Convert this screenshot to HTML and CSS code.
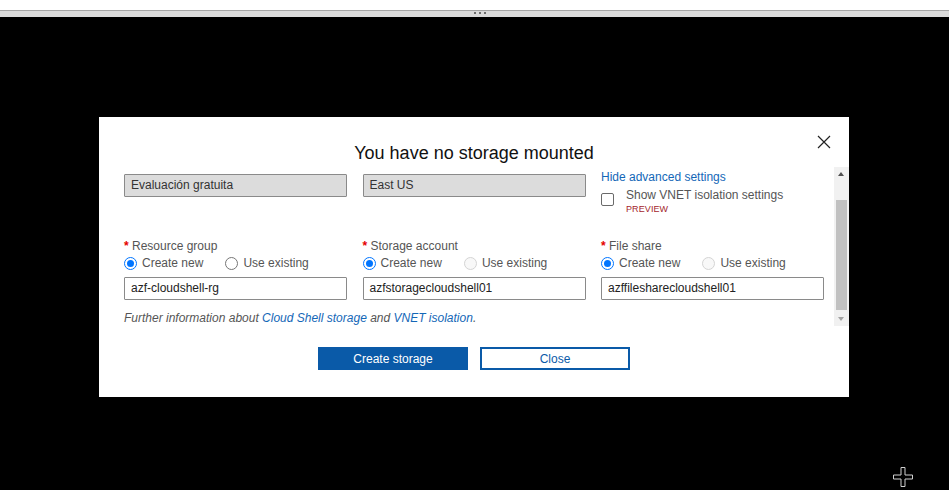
FILE: index.html
```html
<!DOCTYPE html>
<html>
<head>
<meta charset="utf-8">
<link rel="stylesheet" href="styles.css">
</head>
<body>
<div class="topspace"></div>
<div class="splitter"><span class="dot"></span><span class="dot"></span><span class="dot"></span></div>
<div class="stage">
  <div class="dialog">
    <button class="close" aria-label="Close">
      <svg width="14" height="14" viewBox="0 0 14 14"><path d="M1 1 L13 13 M13 1 L1 13" stroke="#222" stroke-width="1.2" fill="none"/></svg>
    </button>
    <h1 class="title">You have no storage mounted</h1>
    <div class="scroller">
      <div class="content">
        <div class="grid">
          <div class="cell pad-top"><div class="field readonly">Evaluación gratuita</div></div>
          <div class="cell pad-top"><div class="field readonly">East US</div></div>
          <div class="cell">
            <a class="link advanced">Hide advanced settings</a>
            <div class="check-row">
              <span class="checkbox"></span>
              <div class="check-text">
                <div class="check-label">Show VNET isolation settings</div>
                <div class="preview">PREVIEW</div>
              </div>
            </div>
          </div>
        </div>
        <div class="grid row2">
          <div class="cell">
            <div class="label"><span class="req">*</span> Resource group</div>
            <div class="radios">
              <span class="radio on"></span><span class="rtext">Create new</span>
              <span class="radio"></span><span class="rtext">Use existing</span>
            </div>
            <div class="field">azf-cloudshell-rg</div>
          </div>
          <div class="cell">
            <div class="label"><span class="req">*</span> Storage account</div>
            <div class="radios">
              <span class="radio on"></span><span class="rtext">Create new</span>
              <span class="radio dis"></span><span class="rtext">Use existing</span>
            </div>
            <div class="field">azfstoragecloudshell01</div>
          </div>
          <div class="cell">
            <div class="label"><span class="req">*</span> File share</div>
            <div class="radios">
              <span class="radio on"></span><span class="rtext">Create new</span>
              <span class="radio dis"></span><span class="rtext">Use existing</span>
            </div>
            <div class="field">azffilesharecloudshell01</div>
          </div>
        </div>
        <p class="info">Further information about <a class="link">Cloud Shell storage</a> and <a class="link">VNET isolation</a>.</p>
      </div>
      <div class="scrollbar">
        <div class="arrow up"></div>
        <div class="track"><div class="thumb"></div></div>
        <div class="arrow down"></div>
      </div>
    </div>
    <div class="actions">
      <button class="btn primary">Create storage</button>
      <button class="btn secondary">Close</button>
    </div>
  </div>
  <svg class="cursor" width="22" height="22" viewBox="0 0 22 22">
    <path d="M9 1.5 H13 V9 H20.5 V13 H13 V20.5 H9 V13 H1.5 V9 H9 Z" fill="#000" stroke="#d0d0d0" stroke-width="1"/>
  </svg>
</div>
</body>
</html>
```

FILE: styles.css
```css
* { box-sizing: border-box; }
html, body { margin: 0; padding: 0; }
body {
  width: 949px;
  height: 490px;
  overflow: hidden;
  background: #000;
  font-family: "Liberation Sans", Arial, sans-serif;
  font-size: 12px;
  color: #333;
}
.topspace { height: 10px; background: #fff; }
.splitter {
  height: 7px;
  background: #dcdcdc;
  border-top: 1px solid #a6a6a6;
  display: flex;
  justify-content: center;
  align-items: flex-start;
  gap: 3px;
  padding-top: 1px;
  padding-left: 10px;
}
.dot { width: 2px; height: 2px; background: #707070; display: block; }
.stage {
  position: relative;
  height: 473px;
  padding-top: 100px;
}
.dialog {
  position: relative;
  width: 750px;
  height: 280px;
  margin: 0 0 0 99px;
  background: #fff;
  padding-top: 25px;
  display: flex;
  flex-direction: column;
}
.close {
  position: absolute;
  top: 18px;
  right: 18px;
  width: 14px;
  height: 14px;
  padding: 0;
  border: 0;
  background: none;
  display: block;
}
.close svg { display: block; }
.title {
  margin: 0;
  text-align: center;
  font-weight: normal;
  font-size: 18px;
  line-height: 22px;
  color: #111;
}
.scroller {
  margin-top: 3px;
  height: 159px;
  display: flex;
}
.content {
  flex: 1;
  padding: 2px 10px 0 25px;
  overflow: hidden;
}
.grid {
  display: grid;
  grid-template-columns: 1fr 1fr 1fr;
  column-gap: 15.5px;
  align-items: start;
}
.pad-top { padding-top: 5px; }
.field {
  height: 23px;
  border: 1px solid #8a8a8a;
  border-radius: 1px;
  padding: 0 6px;
  line-height: 20px;
  color: #222;
  font-size: 12px;
  white-space: nowrap;
}
.field.readonly { background: #dcdcdc; color: #333; }
.link { color: #1467b7; text-decoration: none; }
.advanced { display: block; line-height: 16px; font-size: 12px; }
.check-row { display: flex; gap: 12px; margin-top: 2px; }
.checkbox {
  width: 13px; height: 13px;
  margin-top: 6px;
  border: 1px solid #6a6a6a;
  border-radius: 2px;
  flex: none;
  background: #fff;
}
.check-label { line-height: 16px; color: #555; }
.preview { font-size: 9px; line-height: 12px; color: #a4262c; letter-spacing: 0.1px; }
.row2 { margin-top: 23px; }
.label { line-height: 16px; color: #555; }
.req { color: #e50000; font-weight: bold; }
.radios {
  display: flex;
  align-items: center;
  height: 18px;
  margin-bottom: 5px;
}
.radio {
  width: 13px; height: 13px;
  border-radius: 50%;
  border: 1px solid #767676;
  flex: none;
  background: #fff;
  position: relative;
}
.radio.on { border-color: #0075ff; }
.radio.on::after {
  content: "";
  position: absolute;
  left: 2px; top: 2px;
  width: 7px; height: 7px;
  border-radius: 50%;
  background: #0075ff;
}
.radio.dis { border-color: #d4d4d4; background: #f8f8f8; }
.rtext { margin-left: 5px; margin-right: 22px; color: #555; }
.info {
  margin: 10px 0 0;
  font-style: italic;
  line-height: 16px;
  color: #555;
}
.scrollbar {
  width: 15px;
  background: #f1f1f1;
  display: flex;
  flex-direction: column;
}
.arrow { height: 15px; position: relative; }
.arrow.up::after {
  content: "";
  position: absolute;
  left: 4px; top: 5px;
  border-left: 3.5px solid transparent;
  border-right: 3.5px solid transparent;
  border-bottom: 4px solid #505050;
}
.arrow.down::after {
  content: "";
  position: absolute;
  left: 4px; top: 5px;
  border-left: 3.5px solid transparent;
  border-right: 3.5px solid transparent;
  border-top: 4px solid #a3a3a3;
}
.track { flex: 1; padding: 18px 2px 2px 2px; }
.thumb { height: 110px; background: #c1c1c1; }
.actions {
  display: flex;
  justify-content: center;
  gap: 12px;
  margin-top: 21px;
}
.btn {
  width: 150px;
  height: 23px;
  font-family: "Liberation Sans", Arial, sans-serif;
  font-size: 12px;
  padding: 0;
  border-radius: 0;
}
.primary { background: #0a5aa8; color: #fff; border: 0; }
.secondary { background: #fff; color: #0a5aa8; border: 2px solid #0a5aa8; }
.cursor { position: absolute; left: 892px; top: 449px; }
```
